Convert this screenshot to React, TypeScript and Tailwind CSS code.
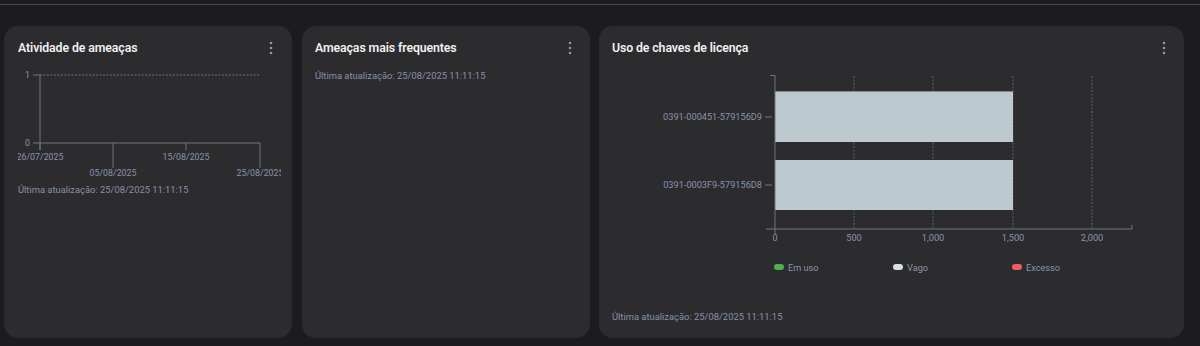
import React from 'react';

const axis = '#6f7488';
const label = '#8a92ab';

function Kebab() {
  return (
    <svg width="6" height="16" viewBox="0 0 6 16" className="shrink-0">
      <circle cx="3" cy="3" r="1.3" fill="#96969c" />
      <circle cx="3" cy="8" r="1.3" fill="#96969c" />
      <circle cx="3" cy="13" r="1.3" fill="#96969c" />
    </svg>
  );
}

function CardHeader({ title }: { title: string }) {
  return (
    <div className="flex items-center justify-between h-[16px]">
      <span className="text-[12.3px] font-semibold text-[#f1f1f3] tracking-[-0.1px]">{title}</span>
      <div className="mr-[4px]">
        <Kebab />
      </div>
    </div>
  );
}

function Updated() {
  return (
    <div className="text-[9.4px] leading-[12px] text-[#8890aa]">Última atualização: 25/08/2025 11:11:15</div>
  );
}

function ThreatChart() {
  const ticks = [
    { x: 36, long: false, text: '26/07/2025' },
    { x: 109, long: true, text: '05/08/2025' },
    { x: 182, long: false, text: '15/08/2025' },
    { x: 256, long: true, text: '25/08/2025' },
  ];
  return (
    <svg width="288" height="120" viewBox="0 0 288 120" className="-ml-[14px] block">
      <defs>
        <clipPath id="clip1">
          <rect x="14" y="0" width="263" height="120" />
        </clipPath>
      </defs>
      <g clipPath="url(#clip1)" fontSize="8.8" fill={label}>
        <line x1="36" y1="15" x2="256" y2="15" stroke={axis} strokeDasharray="2 1.5" />
        <line x1="29" y1="15" x2="36" y2="15" stroke={axis} />
        <text x="26" y="18" textAnchor="end">1</text>
        <line x1="36" y1="15" x2="36" y2="90" stroke={axis} />
        <line x1="29" y1="83" x2="256" y2="83" stroke={axis} />
        <text x="26" y="86" textAnchor="end">0</text>
        {ticks.map((t) => (
          <g key={t.text}>
            <line x1={t.x} y1="83" x2={t.x} y2={t.long ? 108 : 90} stroke={axis} />
            <text x={t.x} y={t.long ? 116 : 100} textAnchor="middle">
              {t.text}
            </text>
          </g>
        ))}
      </g>
    </svg>
  );
}

function LicenseChart() {
  // page coords minus card origin (599, 60)
  const ox = 599;
  const oy = 60;
  const X = (v: number) => v - ox;
  const Y = (v: number) => v - oy;
  const grid = [854, 933, 1013, 1092];
  const values = [
    { x: 775, t: '0' },
    { x: 854, t: '500' },
    { x: 933, t: '1,000' },
    { x: 1013, t: '1,500' },
    { x: 1092, t: '2,000' },
  ];
  return (
    <svg width="585" height="220" viewBox="0 0 585 220" className="-ml-[13px] block">
      <g fontSize="9.2" fill={label}>
        {grid.map((g) => (
          <line key={g} x1={X(g)} y1={Y(76)} x2={X(g)} y2={Y(229)} stroke="#5c6072" strokeDasharray="2 1.5" />
        ))}
        <rect x={X(775)} y={Y(91)} width={1013 - 775} height={51} fill="#bccacf" />
        <line x1={X(775)} y1={Y(91.5)} x2={X(1013)} y2={Y(91.5)} stroke="#7f878c" />
        <rect x={X(775)} y={Y(160)} width={1013 - 775} height={50} fill="#bccacf" />
        <line x1={X(770)} y1={Y(75.5)} x2={X(775)} y2={Y(75.5)} stroke={axis} />
        <line x1={X(775)} y1={Y(75)} x2={X(775)} y2={Y(234)} stroke={axis} />
        <line x1={X(766)} y1={Y(229)} x2={X(1132)} y2={Y(229)} stroke={axis} />
        <line x1={X(1132)} y1={Y(225)} x2={X(1132)} y2={Y(229)} stroke={axis} />
        <line x1={X(765)} y1={Y(117)} x2={X(772)} y2={Y(117)} stroke={axis} />
        <line x1={X(765)} y1={Y(185)} x2={X(772)} y2={Y(185)} stroke={axis} />
        <text x={X(762)} y={Y(120)} textAnchor="end">0391-000451-579156D9</text>
        <text x={X(762)} y={Y(188)} textAnchor="end">0391-0003F9-579156D8</text>
        {values.map((v) => (
          <text key={v.t} x={X(v.x)} y={Y(241)} textAnchor="middle">
            {v.t}
          </text>
        ))}
        <rect x={X(774)} y={Y(264)} width="10" height="6" rx="3" fill="#4caf50" />
        <text x={X(788)} y={Y(270.5)}>Em uso</text>
        <rect x={X(893)} y={Y(264)} width="10" height="6" rx="3" fill="#d6dfe2" />
        <text x={X(907)} y={Y(270.5)}>Vago</text>
        <rect x={X(1012)} y={Y(264)} width="10" height="6" rx="3" fill="#f45d5d" />
        <text x={X(1026)} y={Y(270.5)}>Excesso</text>
      </g>
    </svg>
  );
}

export default function App() {
  return (
    <div className="w-[1200px] h-[346px] bg-[#1c1c1f] overflow-hidden" style={{ fontFamily: 'Roboto, "Liberation Sans", sans-serif' }}>
      <div className="h-[4px]" />
      <div className="h-px bg-[#46464b]" />
      <div className="flex pt-[21px] pl-[4px] pr-[16px] h-[341px] pb-[8px]">
        <div className="w-[288px] rounded-[14px] bg-[#2c2c2f] px-[14px] pt-[14px] flex flex-col">
          <CardHeader title="Atividade de ameaças" />
          <div className="mt-[4px]">
            <ThreatChart />
          </div>
          <div className="mt-[4px]">
            <Updated />
          </div>
        </div>
        <div className="w-[288px] ml-[10px] rounded-[14px] bg-[#2c2c2f] px-[13px] pt-[14px] flex flex-col">
          <CardHeader title="Ameaças mais frequentes" />
          <div className="mt-[14px]">
            <Updated />
          </div>
        </div>
        <div className="w-[585px] ml-[9px] rounded-[14px] bg-[#2c2c2f] px-[13px] pt-[14px] pb-[15px] flex flex-col">
          <CardHeader title="Uso de chaves de licença" />
          <div className="mt-[4px]">
            <LicenseChart />
          </div>
          <div className="mt-auto">
            <Updated />
          </div>
        </div>
      </div>
    </div>
  );
}
